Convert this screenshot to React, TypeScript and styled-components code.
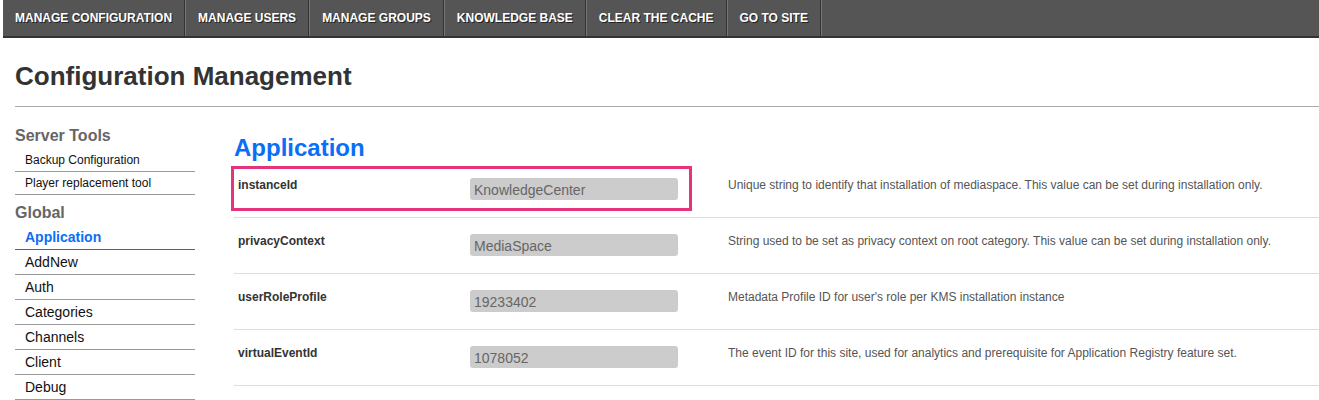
import styled, { createGlobalStyle } from "styled-components";

interface INavLink {
  active?: boolean;
  big?: boolean;
}

interface IField {
  highlighted?: boolean;
}

const topMenu = [
  "Manage Configuration",
  "Manage Users",
  "Manage Groups",
  "Knowledge Base",
  "Clear the Cache",
  "Go to Site",
];

const serverTools = ["Backup Configuration", "Player replacement tool"];

const globalModules = [
  "Application",
  "AddNew",
  "Auth",
  "Categories",
  "Channels",
  "Client",
  "Debug",
];

const settings = [
  {
    name: "instanceId",
    value: "KnowledgeCenter",
    info: "Unique string to identify that installation of mediaspace. This value can be set during installation only.",
    highlighted: true,
  },
  {
    name: "privacyContext",
    value: "MediaSpace",
    info: "String used to be set as privacy context on root category. This value can be set during installation only.",
  },
  {
    name: "userRoleProfile",
    value: "19233402",
    info: "Metadata Profile ID for user's role per KMS installation instance",
  },
  {
    name: "virtualEventId",
    value: "1078052",
    info: "The event ID for this site, used for analytics and prerequisite for Application Registry feature set.",
  },
];

const App = () => {
  return (
    <Page>
      <GlobalStyle />
      <TopBar>
        {topMenu.map((item) => (
          <TopItem key={item}>{item}</TopItem>
        ))}
      </TopBar>
      <Content>
        <Title>Configuration Management</Title>
        <Columns>
          <Sidebar>
            <SectionTitle>Server Tools</SectionTitle>
            {serverTools.map((item) => (
              <NavLink key={item}>{item}</NavLink>
            ))}
            <SectionTitle>Global</SectionTitle>
            {globalModules.map((item) => (
              <NavLink key={item} big active={item === "Application"}>
                {item}
              </NavLink>
            ))}
          </Sidebar>
          <Main>
            <ModuleTitle>Application</ModuleTitle>
            {settings.map((s) => (
              <Row key={s.name}>
                <Field highlighted={s.highlighted}>
                  <Label>{s.name}</Label>
                  <Input readOnly value={s.value} />
                </Field>
                <Info>{s.info}</Info>
              </Row>
            ))}
          </Main>
        </Columns>
      </Content>
    </Page>
  );
};

export default App;

const GlobalStyle = createGlobalStyle`
  body {
    margin: 0;
    background: #fff;
    font-family: "Liberation Sans", Arial, sans-serif;
  }
`;

const Page = styled.div`
  padding-left: 3px;
  width: 1316px;
  overflow: hidden;
`;

const TopBar = styled.nav`
  display: flex;
  height: 36px;
  background: #555;
  border-bottom: 2px solid #333;
`;

const TopItem = styled.a`
  display: flex;
  align-items: center;
  padding: 0 12px 1px;
  color: #fff;
  font-size: 12px;
  font-weight: bold;
  text-transform: uppercase;
  text-shadow: 1px 1px 0 #222;
  border-right: 1px solid #333;
  box-shadow: 1px 0 0 #777;
  margin-right: 1px;
  cursor: pointer;
`;

const Content = styled.div`
  padding: 0 0 0 12px;
`;

const Title = styled.h1`
  margin: 23px 0 0;
  padding-bottom: 15px;
  font-size: 26px;
  line-height: 30px;
  color: #333;
  border-bottom: 1px solid #aaa;
`;

const Columns = styled.div`
  display: flex;
  gap: 39px;
  padding-top: 19px;
`;

const Sidebar = styled.aside`
  width: 180px;
  flex-shrink: 0;
  display: flex;
  flex-direction: column;
`;

const SectionTitle = styled.h3`
  margin: 0 0 3px;
  font-size: 16px;
  line-height: 20px;
  color: #666;

  & ~ & {
    margin-top: 8px;
    margin-bottom: 2px;
  }
`;

const NavLink: any = styled.a<INavLink>`
  display: block;
  padding-left: 10px;
  font-size: ${(p) => (p.big ? "14px" : "12px")};
  line-height: ${(p) => (p.big ? "24px" : "22px")};
  font-weight: ${(p) => (p.active ? "bold" : "normal")};
  color: ${(p) => (p.active ? "#0b6ef7" : "#111")};
  border-bottom: 1px solid ${(p) => (p.active ? "#0b6ef7" : "#999")};
  cursor: pointer;
`;

const Main = styled.main`
  flex: 1;
  min-width: 0;
`;

const ModuleTitle = styled.h2`
  margin: 8px 0 0;
  font-size: 24px;
  line-height: 28px;
  color: #0b6ef7;
`;

const Row = styled.div`
  display: flex;
  align-items: flex-start;
  padding: 4px 0 6px;
  border-bottom: 1px solid #ddd;
`;

const Field: any = styled.div<IField>`
  display: flex;
  align-items: flex-start;
  width: 455px;
  margin-left: -3px;
  padding: 9px 0 8px;
  border: 3px solid ${(p) => (p.highlighted ? "#e6347c" : "transparent")};
`;

const Label = styled.div`
  width: 232px;
  padding-left: 4px;
  font-size: 12px;
  line-height: 14px;
  font-weight: bold;
  color: #333;
`;

const Input = styled.input`
  width: 208px;
  height: 22px;
  box-sizing: border-box;
  padding: 2px 4px 0;
  border: none;
  border-radius: 3px;
  background: #ccc;
  font-family: "Liberation Sans", Arial, sans-serif;
  font-size: 14px;
  color: #666;
  outline: none;
`;

const Info = styled.div`
  margin-left: 36px;
  padding-top: 12px;
  font-size: 12px;
  line-height: 14px;
  color: #555;
`;
